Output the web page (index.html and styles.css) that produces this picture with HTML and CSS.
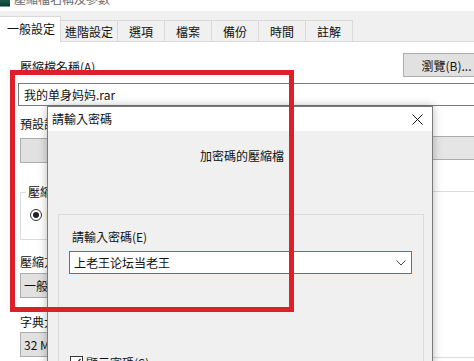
FILE: index.html
```html
<!DOCTYPE html>
<html lang="zh-Hant">
<head>
  <meta charset="UTF-8">
  <title>壓縮檔名稱及參數</title>
  <link rel="stylesheet" href="styles.css">
</head>
<body>
  <div class="window">
    <div class="titlebar">
      <span class="app-icon"></span>
      <span class="title">壓縮檔名稱及參數</span>
    </div>

    <div class="tabs">
      <div class="tab active">一般設定</div>
      <div class="tab">進階設定</div>
      <div class="tab">選項</div>
      <div class="tab">檔案</div>
      <div class="tab">備份</div>
      <div class="tab">時間</div>
      <div class="tab">註解</div>
    </div>

    <div class="page">
      <div class="name-row">
        <span class="label">壓縮檔名稱(A)</span>
        <button class="btn browse">瀏覽(B)...</button>
      </div>
      <div class="field">我的单身妈妈.rar</div>

      <div class="columns">
        <div class="col-left">
          <div class="label gap-10">預設設定檔</div>
          <button class="btn wide first">設定檔(F)...</button>

          <div class="group">
            <span class="legend">壓縮檔格式</span>
            <div class="radio-row"><span class="radio"></span>RAR</div>
          </div>

          <div class="label gap-14">壓縮方式(C)</div>
          <button class="btn wide">一般</button>

          <div class="label gap-16">字典大小(D)</div>
          <button class="btn wide tight">32 MB</button>
        </div>

        <div class="col-right">
          <div class="label gap-10">更新模式(U)</div>
          <div class="combo-gray">新增並取代檔案</div>
          <div class="group tall"></div>
        </div>
      </div>
    </div>
  </div>

  <!-- password dialog on top of the main window -->
  <div class="dialog">
    <div class="dialog-title">
      <span>請輸入密碼</span>
      <svg class="close" width="11" height="11" viewBox="0 0 11 11">
        <path d="M0.5 0.5 L10.5 10.5 M10.5 0.5 L0.5 10.5" stroke="#1a1a1a" stroke-width="1" fill="none"/>
      </svg>
    </div>
    <div class="dialog-body">
      <div class="subtitle">加密碼的壓縮檔</div>
      <div class="inner">
        <div class="label">請輸入密碼(E)</div>
        <div class="combo">
          <span>上老王论坛当老王</span>
          <svg width="10" height="6" viewBox="0 0 10 6">
            <path d="M0.5 0.5 L5 5 L9.5 0.5" stroke="#444" stroke-width="1" fill="none"/>
          </svg>
        </div>
        <div class="check-row">
          <span class="checkbox">
            <svg width="11" height="11" viewBox="0 0 11 11">
              <path d="M1.5 5.5 L4 8 L9.5 2" stroke="#222" stroke-width="1.2" fill="none"/>
            </svg>
          </span>
          顯示密碼(S)
        </div>
      </div>
    </div>
  </div>

  <div class="highlight"></div>
</body>
</html>
```

FILE: styles.css
```css
body {
  margin: 0;
  width: 474px;
  height: 361px;
  overflow: hidden;
  position: relative;
  background: #fff;
  font-family: "Noto Sans CJK TC", "Noto Sans", sans-serif;
  font-size: 12px;
  color: #111;
}
.window {
  width: 490px;
}
.titlebar {
  height: 11px;
  overflow: hidden;
  display: flex;
  align-items: flex-start;
  background: #fff;
}
.app-icon {
  width: 10px;
  height: 6px;
  background: linear-gradient(#1d5b4a, #0f3b30);
  border-bottom: 1px solid #6b9d8c;
}
.title {
  margin-left: 4px;
  margin-top: -9px;
  line-height: 16px;
  color: #6a6a6a;
}
.tabs {
  height: 30px;
  display: flex;
  align-items: flex-end;
  background: #f0f0f0;
  border-bottom: 1px solid #d9d9d9;
}
.tab {
  height: 21px;
  box-sizing: border-box;
  min-width: 48px;
  padding: 1px 4px 0;
  margin-left: -1px;
  line-height: 19px;
  text-align: center;
  border: 1px solid #d9d9d9;
  border-bottom: none;
  background: #f0f0f0;
}
.tab.active {
  height: 26px;
  margin-left: -2px;
  margin-bottom: -1px;
  padding: 0 5px 0 8px;
  line-height: 24px;
  background: #fff;
  position: relative;
  z-index: 1;
}
.page {
  padding-left: 18px;
}
.label {
  line-height: 16px;
  margin-left: 2px;
  white-space: nowrap;
}
.gap-10 { margin-top: 10px; }
.gap-14 { margin-top: 14px; }
.gap-16 { margin-top: 16px; }
.name-row {
  height: 35px;
  display: flex;
  align-items: flex-end;
  justify-content: space-between;
}
.name-row .label {
  margin-bottom: 2px;
}
.btn {
  font-family: inherit;
  font-size: 12px;
  color: #111;
  background: #e1e1e1;
  border: 1px solid #adadad;
  padding: 0;
  box-sizing: border-box;
}
.browse {
  width: 87px;
  height: 24px;
}
.field {
  margin-top: 6px;
  height: 23px;
  box-sizing: border-box;
  border: 1px solid #7a7a7a;
  padding-left: 5px;
  line-height: 21px;
}
.columns {
  display: grid;
  grid-template-columns: 212px 1fr;
  column-gap: 20px;
}
.wide {
  display: block;
  width: 140px;
  height: 25px;
  margin: 3px 0 0 2px;
  text-align: left;
  padding-left: 3px;
}
.wide.first {
  margin-top: 6px;
  text-align: center;
}
.wide.tight {
  margin-top: 2px;
}
.group {
  margin: 29px 0 0 2px;
  height: 48px;
  box-sizing: border-box;
  border: 1px solid #dcdcdc;
  display: flex;
  flex-direction: column;
  align-items: flex-start;
}
.legend {
  margin: -9px 0 0 5px;
  padding: 0 2px;
  line-height: 16px;
  background: #fff;
}
.radio-row {
  margin: 9px 0 0 9px;
  display: flex;
  align-items: center;
  gap: 4px;
  line-height: 12px;
}
.radio {
  width: 12px;
  height: 12px;
  box-sizing: border-box;
  border: 1px solid #333;
  border-radius: 50%;
  display: flex;
  align-items: center;
  justify-content: center;
}
.radio::after {
  content: "";
  width: 6px;
  height: 6px;
  border-radius: 50%;
  background: #222;
}
.combo-gray {
  margin-top: 4px;
  height: 24px;
  box-sizing: border-box;
  background: #e5e5e5;
  border: 1px solid #acacac;
  padding-left: 6px;
  line-height: 22px;
}
.group.tall {
  margin: 31px 0 0 0;
  height: 167px;
}

/* dialog */
.dialog {
  position: absolute;
  left: 47px;
  top: 106px;
  width: 386px;
  height: 280px;
  box-sizing: border-box;
  border: 1px solid #7b7b7b;
  background: #f0f0f0;
  box-shadow: 0 0 9px rgba(0, 0, 0, 0.28);
  z-index: 2;
}
.dialog-title {
  height: 24px;
  background: #fff;
  display: flex;
  align-items: center;
  justify-content: space-between;
  padding: 0 9px 0 4px;
  line-height: 22px;
}
.subtitle {
  padding-top: 17px;
  line-height: 16px;
  text-align: center;
  padding-left: 4px;
}
.inner {
  margin: 50px 8px 0 10px;
  height: 200px;
  border: 1px solid #dcdcdc;
  padding: 14px 11px 0;
}
.combo {
  margin: 6px 0 0 -1px;
  height: 23px;
  box-sizing: border-box;
  background: #fff;
  border: 1px solid #3b7cb6;
  display: flex;
  align-items: center;
  justify-content: space-between;
  padding: 0 5px 0 4px;
}
.check-row {
  margin-top: 82px;
  display: flex;
  align-items: center;
  gap: 3px;
  line-height: 13px;
}
.checkbox {
  width: 13px;
  height: 13px;
  box-sizing: border-box;
  border: 1px solid #333;
  background: #fff;
  display: flex;
}
.highlight {
  position: absolute;
  left: 10px;
  top: 70px;
  width: 284px;
  height: 242px;
  box-sizing: border-box;
  border: 5px solid #de1f27;
  z-index: 3;
}
```
